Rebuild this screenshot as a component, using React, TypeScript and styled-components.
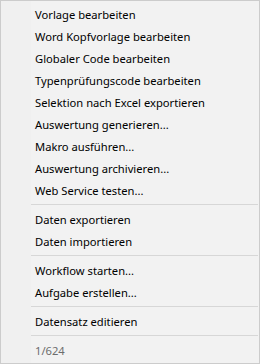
import React from 'react';
import styled, { createGlobalStyle } from 'styled-components';

const colors = {
  border: '#cccccc',
  gutter: '#f0f0f0',
  background: '#f2f2f2',
  separator: '#d7d7d7',
  text: '#000000',
  muted: '#6d6d6d',
};

const GlobalStyle = createGlobalStyle`
  html, body {
    margin: 0;
    padding: 0;
    background: #ffffff;
  }
`;

const Menu = styled.div`
  box-sizing: border-box;
  width: 260px;
  height: 364px;
  border: 1px solid ${colors.border};
  padding: 2px 0 2px 0;
  display: flex;
  flex-direction: column;
  font-family: "Noto Sans", "Segoe UI", sans-serif;
  font-size: 11.2px;
  color: ${colors.text};
  background: linear-gradient(
    to right,
    ${colors.gutter} 0,
    ${colors.gutter} 30px,
    ${colors.background} 30px
  );
`;

const Item = styled.div<{ $muted?: boolean }>`
  height: 22px;
  display: flex;
  align-items: center;
  padding-left: 34px;
  color: ${(p) => (p.$muted ? colors.muted : colors.text)};
  white-space: nowrap;
`;

const Separator = styled.div`
  height: 7px;
  display: flex;
  align-items: center;
  padding-left: 30px;
  padding-right: 1px;

  &::after {
    content: '';
    flex: 1;
    height: 1px;
    background: ${colors.separator};
  }
`;

const groups: string[][] = [
  [
    'Vorlage bearbeiten',
    'Word Kopfvorlage bearbeiten',
    'Globaler Code bearbeiten',
    'Typenprüfungscode bearbeiten',
    'Selektion nach Excel exportieren',
    'Auswertung generieren...',
    'Makro ausführen...',
    'Auswertung archivieren...',
    'Web Service testen...',
  ],
  ['Daten exportieren', 'Daten importieren'],
  ['Workflow starten...', 'Aufgabe erstellen...'],
  ['Datensatz editieren'],
];

const App = () => {
  return (
    <>
      <GlobalStyle />
      <Menu>
        {groups.map((group, i) => (
          <React.Fragment key={i}>
            {group.map((label) => (
              <Item key={label}>{label}</Item>
            ))}
            <Separator />
          </React.Fragment>
        ))}
        <Item $muted>1/624</Item>
      </Menu>
    </>
  );
};

export default App;
